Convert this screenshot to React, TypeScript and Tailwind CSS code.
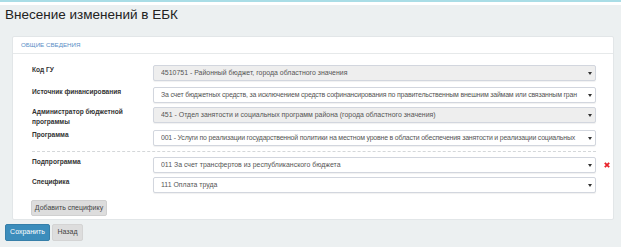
import React from "react";

const Arrow = () => (
  <svg width="4" height="3" viewBox="0 0 4 3" className="shrink-0">
    <path d="M0 0 L4 0 L2 3 Z" fill="#333" />
  </svg>
);

const Select = ({ text, disabled, tight }: { text: string; disabled?: boolean; tight?: boolean }) => (
  <div
    className={`w-[443px] h-[16px] flex items-center pl-[7px] pr-[3px] border border-[#d2d6de] rounded-[2px] shadow-[0_1px_1px_rgba(0,0,0,0.06)] ${
      disabled ? "bg-[#eeeeee]" : "bg-white"
    }`}
  >
    <span
      className={`flex-1 min-w-0 mr-[8px] text-[6.95px] leading-[10px] text-[#555] whitespace-nowrap overflow-hidden ${
        tight ? "tracking-[-0.19px]" : ""
      }`}
    >
      {text}
    </span>
    <Arrow />
  </div>
);

const Row = ({
  label,
  text,
  disabled,
  remove,
  tight,
  cls,
}: {
  label: React.ReactNode;
  text: string;
  disabled?: boolean;
  remove?: boolean;
  tight?: boolean;
  cls?: string;
}) => (
  <div className={`flex items-start ${cls ?? ""}`}>
    <div className="w-[121px] text-[6.6px] leading-[10px] font-bold text-[#333]">{label}</div>
    <Select text={text} disabled={disabled} tight={tight} />
    {remove && (
      <svg width="6" height="6" viewBox="0 0 6 6" className="ml-[8px] mt-[5px]">
        <path d="M0.8 0.8 L5.2 5.2 M5.2 0.8 L0.8 5.2" stroke="#e8222a" strokeWidth="1.8" />
      </svg>
    )}
  </div>
);

export default function App() {
  return (
    <div className="w-[624px] h-[247px] bg-white overflow-hidden font-['Liberation_Sans',Arial,sans-serif]">
      <div className="w-[621px] h-[2px] bg-[#a9dde6]" />
      <div className="mt-[3px] w-[621px] h-[242px] bg-[#ecf0f1] pt-[2px] pl-[5px]">
        <h1 className="text-[13.5px] leading-[16px] text-[#222] font-normal">Внесение изменений в ЕБК</h1>
        <div className="mt-[13px] ml-[7px] w-[602px] h-[184px] bg-white border border-[#e2e6e8] rounded-[2px]">
          <div className="h-[17px] border-b border-[#e6e9ea] pl-[8px] flex items-center">
            <span className="text-[6.2px] text-[#5b8fc6] uppercase">Общие сведения</span>
          </div>
          <div className="pl-[19px] pt-[11px]">
            <Row label="Код ГУ" text="4510751 - Районный бюджет, города областного значения" disabled />
            <Row
              cls="mt-[6px]"
              tight
              label="Источник финансирования"
              text="За счет бюджетных средств, за исключением средств софинансирования по правительственным внешним займам или связанным гран"
            />
            <Row
              cls="mt-[4px]"
              label={<>Администратор бюджетной<br />программы</>}
              text="451 - Отдел занятости и социальных программ района (города областного значения)"
              disabled
            />
            <Row
              cls="mt-[3px]"
              tight
              label="Программа"
              text="001 - Услуги по реализации государственной политики на местном уровне в области обеспечения занятости и реализации социальных"
            />
            <div className="mt-[5px] w-[564px] border-t border-dashed border-[#d4d7d9]" />
            <Row cls="mt-[5px]" label="Подпрограмма" text="011 За счет трансфертов из республиканского бюджета" remove />
            <Row cls="mt-[4px]" label="Специфика" text="111 Оплата труда" />
            <button className="mt-[5px] -ml-[1px] w-[76px] h-[16px] bg-[#dddddd] border border-[#d0d0d0] rounded-[2px] text-[7px] text-[#444]">
              Добавить специфику
            </button>
          </div>
        </div>
        <div className="mt-[4px] flex gap-[2px]">
          <button className="w-[45px] h-[17px] bg-[#3c8dbc] border border-[#367fa9] rounded-[2px] text-[7px] text-white">
            Сохранить
          </button>
          <button className="w-[31px] h-[17px] bg-[#dddddd] border border-[#d4d4d4] rounded-[2px] text-[7px] text-[#444]">
            Назад
          </button>
        </div>
      </div>
    </div>
  );
}
